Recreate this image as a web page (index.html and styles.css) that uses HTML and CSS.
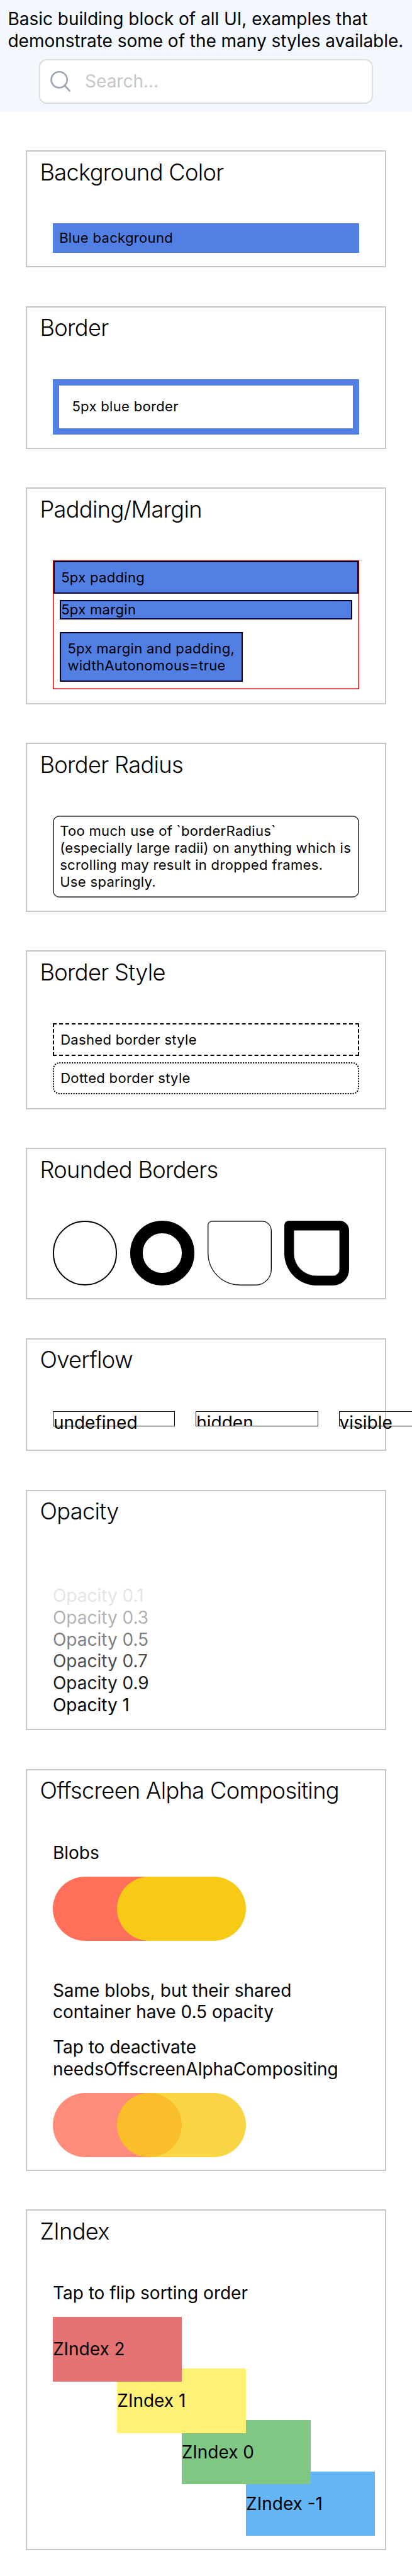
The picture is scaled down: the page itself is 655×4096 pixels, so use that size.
FILE: index.html
```html
<!DOCTYPE html>
<html lang="en">
<head>
<meta charset="utf-8">
<title>View</title>
<link rel="stylesheet" href="styles.css">
</head>
<body>
<header class="header">
  <p class="intro">Basic building block of all UI, examples that<br>demonstrate some of the many styles available.</p>
  <div class="search">
    <svg class="search-icon" viewBox="0 0 48 49" fill="none" stroke="#9ba5b4" stroke-width="3.9" stroke-linecap="round">
      <circle cx="20.7" cy="20.2" r="18.5"/>
      <path d="M33.6 34 45 46.3"/>
    </svg>
    <span class="search-text">Search...</span>
  </div>
</header>
<main class="list">
  <section class="card card-background">
    <h2 class="title">Background Color</h2>
    <div class="content"><div class="small fill">Blue background</div></div>
  </section>
  <section class="card card-border">
    <h2 class="title">Border</h2>
    <div class="content"><div class="small thick">5px blue border</div></div>
  </section>
  <section class="card card-padding">
    <h2 class="title">Padding/Margin</h2>
    <div class="content">
      <div class="frame small">
        <div class="block padded">5px padding</div>
        <div class="block spaced">5px margin</div>
        <div class="block spaced padded narrow">5px margin and padding,<br>widthAutonomous=true</div>
      </div>
    </div>
  </section>
  <section class="card card-radius">
    <h2 class="title">Border Radius</h2>
    <div class="content">
      <div class="small rounded">Too much use of `borderRadius`<br>(especially large radii) on anything which is<br>scrolling may result in dropped frames.<br>Use sparingly.</div>
    </div>
  </section>
  <section class="card card-style">
    <h2 class="title">Border Style</h2>
    <div class="content">
      <div class="small dashed">Dashed border style</div>
      <div class="small dotted">Dotted border style</div>
    </div>
  </section>
  <section class="card card-rounded">
    <h2 class="title">Rounded Borders</h2>
    <div class="content shapes">
      <div class="shape circle"></div>
      <div class="shape ring"></div>
      <div class="shape corners"></div>
      <div class="shape corners heavy"></div>
    </div>
  </section>
  <section class="card card-overflow">
    <h2 class="title">Overflow</h2>
    <div class="content overflow-row">
      <div class="overflow-box">undefined</div>
      <div class="overflow-box clipped">hidden</div>
      <div class="overflow-box">visible</div>
    </div>
  </section>
  <section class="card card-opacity">
    <h2 class="title">Opacity</h2>
    <div class="content opacities">
      <div class="o1">Opacity 0.1</div>
      <div class="o3">Opacity 0.3</div>
      <div class="o5">Opacity 0.5</div>
      <div class="o7">Opacity 0.7</div>
      <div class="o9">Opacity 0.9</div>
      <div>Opacity 1</div>
    </div>
  </section>
  <section class="card card-alpha">
    <h2 class="title">Offscreen Alpha Compositing</h2>
    <div class="content">
      <p class="text">Blobs</p>
      <div class="blobs"><div class="blob red"></div><div class="blob yellow"></div></div>
      <p class="text second">Same blobs, but their shared<br>container have 0.5 opacity</p>
      <p class="text">Tap to deactivate<br>needsOffscreenAlphaCompositing</p>
      <div class="blobs"><div class="blob red-soft"></div><div class="blob yellow-soft"></div></div>
    </div>
  </section>
  <section class="card card-zindex">
    <h2 class="title">ZIndex</h2>
    <div class="content">
      <p class="text">Tap to flip sorting order</p>
      <div class="tiles">
        <div class="tile t2">ZIndex 2</div>
        <div class="tile t1">ZIndex 1</div>
        <div class="tile t0">ZIndex 0</div>
        <div class="tile tm1">ZIndex -1</div>
      </div>
    </div>
  </section>
</main>
</body>
</html>
```
FILE: styles.css
```css
/* 1rem = 10 points of the 320 point wide screen */
html {
  font-size: 20.48px;
}

* {
  box-sizing: border-box;
}

body {
  margin: 0;
  height: 200rem;
  overflow: hidden;
  background: #fff;
  color: #000;
  font-family: Inter, "Liberation Sans", sans-serif;
  font-size: 1.367rem;
  line-height: 1.7rem;
}

p, h2 {
  margin: 0;
}

.header {
  height: 8.667rem;
  padding-top: 0.62rem;
  background: #f3f8ff;
}

.intro {
  padding-left: 0.61rem;
  white-space: nowrap;
  letter-spacing: -0.0008em;
}

.search {
  display: flex;
  align-items: center;
  height: 3.47rem;
  margin: 0.56rem 3.02rem 0;
  padding-left: 0.8rem;
  border: 0.1rem solid #ddd;
  border-radius: 0.6rem;
  background: #fff;
}

.search-icon {
  width: 1.6rem;
  height: 1.633rem;
}

.search-text {
  margin-left: 1.08rem;
  color: #c7c7c7;
}

.list {
  display: flex;
  flex-direction: column;
  gap: 3rem;
  padding: 3rem 2rem 0;
}

.card {
  border: 0.1rem solid #c7c7c9;
  background: #fff;
}

.card-background { height: 9.1rem; }
.card-border { height: 11.1rem; }
.card-padding { height: 16.8rem; }
.card-radius { height: 13.133rem; }
.card-style { height: 12.333rem; }
.card-rounded { height: 11.767rem; }
.card-overflow { height: 8.767rem; }
.card-opacity { height: 18.667rem; }
.card-alpha { height: 31.2rem; }
.card-zindex { height: 26.467rem; }

.title {
  height: 5.567rem;
  padding: 0.57rem 0 0 1rem;
  font-size: 1.767rem;
  font-weight: 300;
  line-height: 2.1rem;
  letter-spacing: -0.018em;
}

.content {
  padding: 0 2rem;
  white-space: nowrap;
}

.small {
  font-size: 1.077rem;
  line-height: 1.313rem;
  letter-spacing: 0.0137em;
}

.fill {
  padding: 0.5rem;
  background: #527fe4;
}

.thick {
  padding: 1rem;
  border: 0.5rem solid #527fe4;
}

.frame {
  display: flex;
  flex-direction: column;
  border: 0.05rem solid #b00;
  box-shadow: inset 0 0 0 0.4px #b00;
}

.block {
  border: 0.1rem solid #003;
  background: #527fe4;
}

.padded { padding: 0.5rem; }
.spaced { margin: 0.5rem; }

.narrow {
  width: 14.2rem;
  line-height: 1.33rem;
}

.rounded {
  padding: 0.5rem;
  border: 0.05rem solid #000;
  border-radius: 0.5rem;
  box-shadow: inset 0 0 0 0.4px #000;
}

.dashed,
.dotted {
  padding: 0.5rem;
  border: 0.1rem dashed #000;
}

.dotted {
  margin-top: 0.5rem;
  border-style: dotted;
  border-radius: 0.5rem;
}

.shapes {
  display: flex;
  gap: 1rem;
}

.shape {
  width: 5rem;
  height: 5rem;
  border: 0.1rem solid #000;
}

.circle,
.ring {
  border-radius: 50%;
}

.ring {
  border-width: 1rem;
}

.corners {
  border-width: 0.06rem;
  border-radius: 0.35rem 0.75rem 1.25rem 2.5rem;
  box-shadow: inset 0 0 0 0.4px #000;
}

.heavy {
  border-width: 0.75rem;
}

.overflow-row {
  display: flex;
  gap: 1.6rem;
}

.overflow-box {
  flex: none;
  width: 9.5rem;
  height: 1.2rem;
  border: 0.05rem solid #000;
}

.clipped {
  overflow: hidden;
}

.opacities {
  padding-top: 1.72rem;
}

.o1 { opacity: 0.1; }
.o3 { opacity: 0.3; }
.o5 { opacity: 0.5; }
.o7 { opacity: 0.7; }
.o9 { opacity: 0.9; }

.text {
  margin-bottom: 1rem;
}

.second {
  margin-top: 3rem;
}

.blobs {
  display: flex;
}

.blob {
  width: 10rem;
  height: 5rem;
  border-radius: 2.5rem;
}

.blob + .blob {
  margin-left: -5rem;
}

.red { background: #ff6f59; }
.yellow { background: #f7cb15; }
.red-soft { background: rgba(255, 111, 89, 0.8); }
.yellow-soft { background: rgba(247, 203, 21, 0.8); }

.tile {
  position: relative;
  display: flex;
  align-items: center;
  width: 10rem;
  height: 5rem;
}

.tile + .tile {
  margin-top: -1rem;
}

.t2 { z-index: 4; background: #e57373; }
.t1 { z-index: 3; margin-left: 5rem; background: #fff176; }
.t0 { z-index: 2; margin-left: 10rem; background: #81c784; }
.tm1 { z-index: 1; margin-left: 15rem; background: #64b5f6; }
```
